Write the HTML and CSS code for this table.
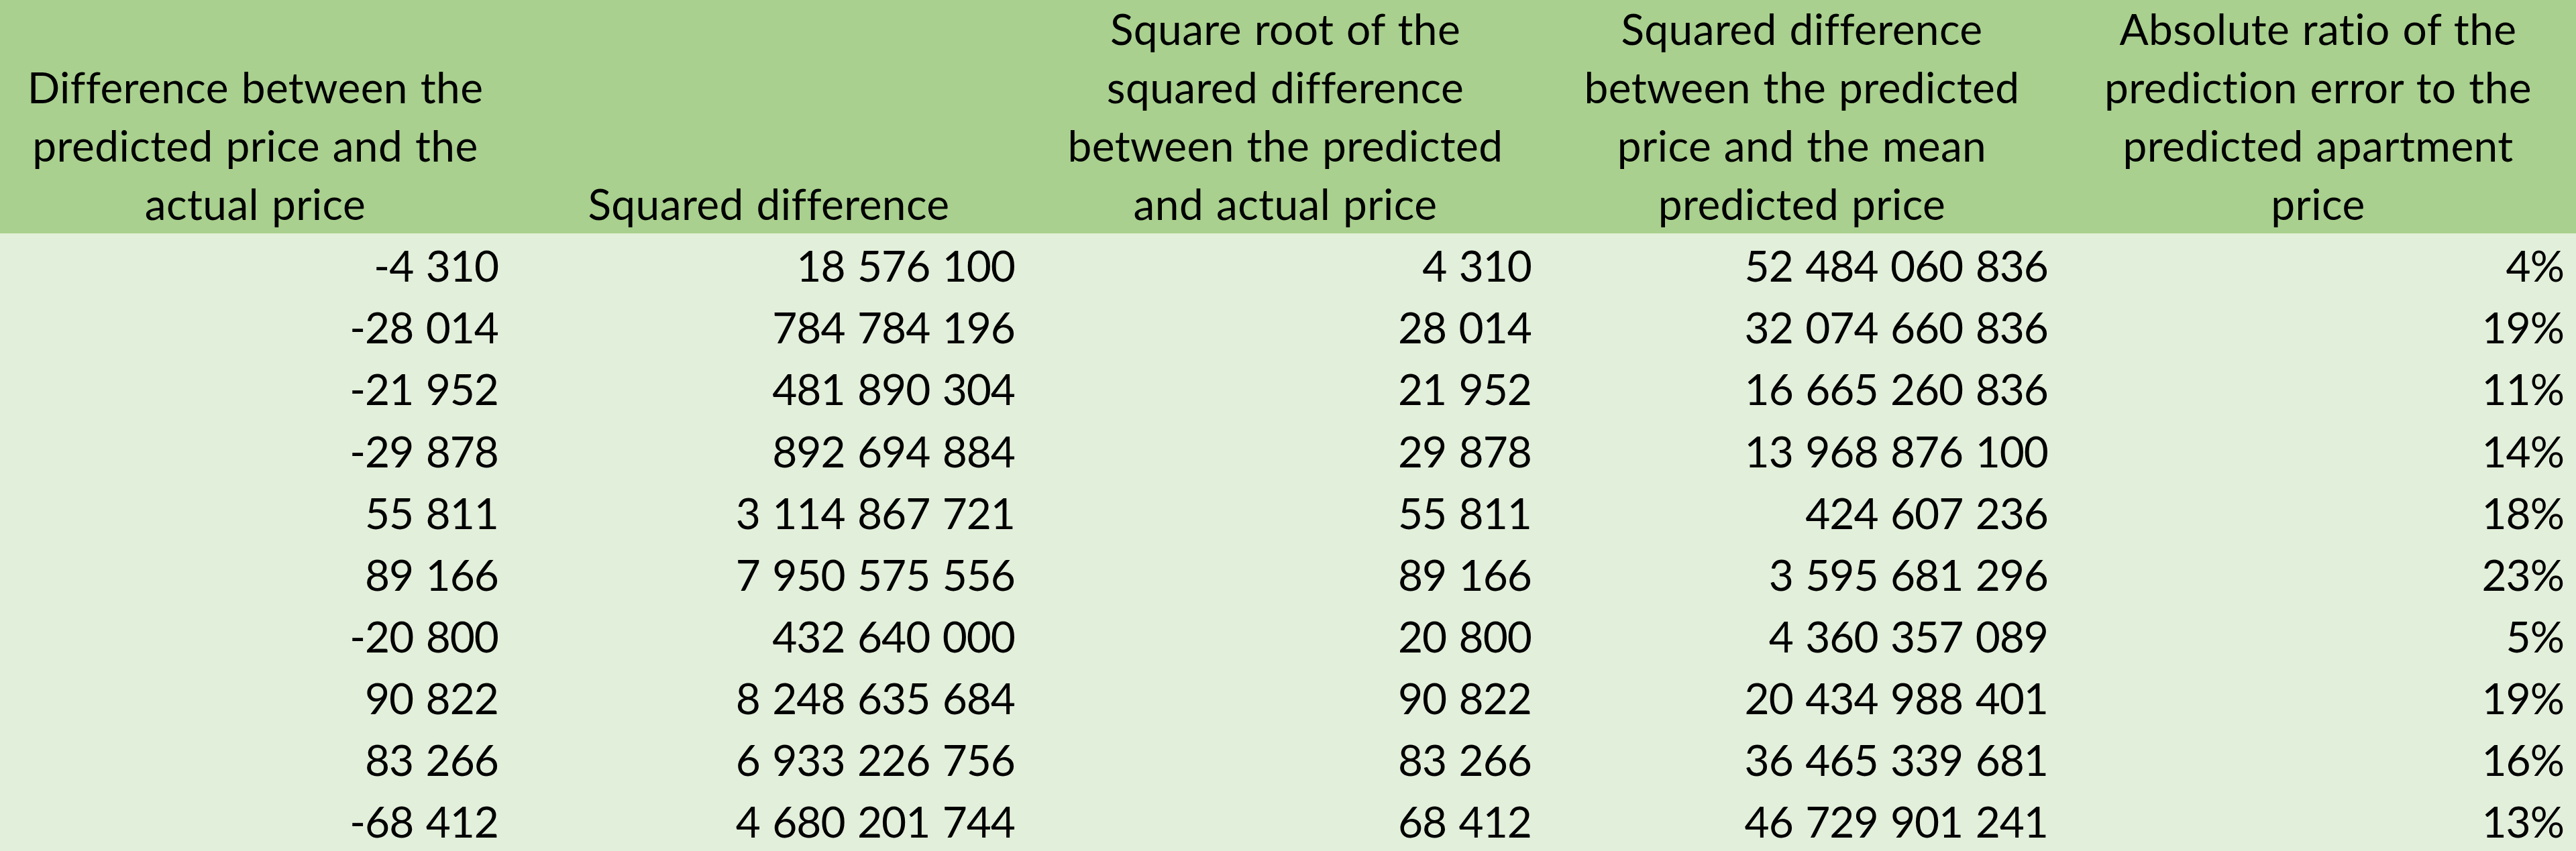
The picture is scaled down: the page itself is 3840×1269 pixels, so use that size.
FILE: index.html
```html
<!DOCTYPE html>
<html lang="en">
<head>
<meta charset="utf-8">
<title>Prediction errors</title>
<link rel="stylesheet" href="styles.css">
</head>
<body>
<div class="sheet">
  <div class="head">Difference between the<br>predicted price and the<br>actual price</div>
  <div class="head">Squared difference</div>
  <div class="head">Square root of the<br>squared difference<br>between the predicted<br>and actual price</div>
  <div class="head">Squared difference<br>between the predicted<br>price and the mean<br>predicted price</div>
  <div class="head">Absolute ratio of the<br>prediction error to the<br>predicted apartment<br>price</div>

  <div class="cell">-4 310</div><div class="cell">18 576 100</div><div class="cell">4 310</div><div class="cell">52 484 060 836</div><div class="cell">4%</div>
  <div class="cell">-28 014</div><div class="cell">784 784 196</div><div class="cell">28 014</div><div class="cell">32 074 660 836</div><div class="cell">19%</div>
  <div class="cell">-21 952</div><div class="cell">481 890 304</div><div class="cell">21 952</div><div class="cell">16 665 260 836</div><div class="cell">11%</div>
  <div class="cell">-29 878</div><div class="cell">892 694 884</div><div class="cell">29 878</div><div class="cell">13 968 876 100</div><div class="cell">14%</div>
  <div class="cell">55 811</div><div class="cell">3 114 867 721</div><div class="cell">55 811</div><div class="cell">424 607 236</div><div class="cell">18%</div>
  <div class="cell">89 166</div><div class="cell">7 950 575 556</div><div class="cell">89 166</div><div class="cell">3 595 681 296</div><div class="cell">23%</div>
  <div class="cell">-20 800</div><div class="cell">432 640 000</div><div class="cell">20 800</div><div class="cell">4 360 357 089</div><div class="cell">5%</div>
  <div class="cell">90 822</div><div class="cell">8 248 635 684</div><div class="cell">90 822</div><div class="cell">20 434 988 401</div><div class="cell">19%</div>
  <div class="cell">83 266</div><div class="cell">6 933 226 756</div><div class="cell">83 266</div><div class="cell">36 465 339 681</div><div class="cell">16%</div>
  <div class="cell">-68 412</div><div class="cell">4 680 201 744</div><div class="cell">68 412</div><div class="cell">46 729 901 241</div><div class="cell">13%</div>
</div>
</body>
</html>
```
FILE: styles.css
```css
html, body {
  margin: 0;
  padding: 0;
  background: #e2efda;
}

.sheet {
  display: grid;
  grid-template-columns: 761px 770px 770px 770px 769px;
  grid-template-rows: 348px repeat(10, 92.1px);
  font-family: "Lato", "Open Sans", "Liberation Sans", sans-serif;
  font-size: 64px;
  color: #000;
}

.head {
  background: #a9d08e;
  display: flex;
  align-items: flex-end;
  justify-content: center;
  text-align: center;
  line-height: 87px;
  padding-bottom: 1px;
  letter-spacing: 0.4px;
  word-spacing: 2px;
  white-space: nowrap;
}

.cell {
  background: #e2efda;
  display: flex;
  align-items: flex-end;
  justify-content: flex-end;
  line-height: 76.8px;
  padding-right: 18px;
  padding-bottom: 5px;
  letter-spacing: -1px;
  word-spacing: 3px;
  white-space: nowrap;
}
```
